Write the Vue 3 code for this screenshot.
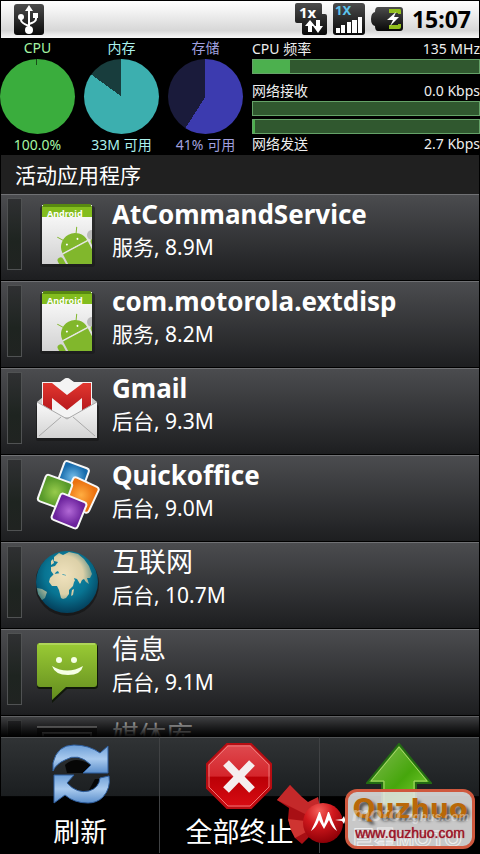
<script setup>
import { ref } from 'vue';

const gauges = [
  { key: 'cpu', label: 'CPU', value: '100.0%' },
  { key: 'mem', label: '内存', value: '33M 可用' },
  { key: 'disk', label: '存储', value: '41% 可用' }
];

const apps = ref([
  { name: 'AtCommandService', detail: '服务, 8.9M', icon: 'android' },
  { name: 'com.motorola.extdisp', detail: '服务, 8.2M', icon: 'android' },
  { name: 'Gmail', detail: '后台, 9.3M', icon: 'gmail' },
  { name: 'Quickoffice', detail: '后台, 9.0M', icon: 'office' },
  { name: '互联网', detail: '后台, 10.7M', icon: 'globe', cjk: true },
  { name: '信息', detail: '后台, 9.1M', icon: 'message', cjk: true },
  { name: '媒体库', icon: 'media', cjk: true }
]);
</script>

<template>
  <div class="phone">
    <header class="status-bar">
      <svg class="usb" viewBox="0 0 32 32">
        <defs>
          <linearGradient id="dark" x1="0" y1="0" x2="0" y2="1">
            <stop offset="0" stop-color="#4c4c4c" /><stop offset="1" stop-color="#080808" />
          </linearGradient>
        </defs>
        <rect x="1" y="1" width="30" height="31" rx="3" fill="url(#dark)" />
        <path d="M16 6v20M16 23q-8-3-8-6v-4M16 21q7-2 7-5v-4" fill="none" stroke="#fff" stroke-width="2" />
        <path d="M12 8l4-6 4 6z" fill="#fff" />
        <circle cx="16" cy="27" r="4" fill="#fff" />
        <circle cx="8" cy="14" r="3" fill="#fff" />
        <rect x="20" y="10" width="5" height="5" fill="#fff" />
      </svg>
      <div class="status-icons">
        <svg width="32" height="32" viewBox="0 0 32 32">
          <path d="M2 0h23q2 0 2 2v9h3q2 0 2 2v17q0 2-2 2H9q-2 0-2-2V20H2q-2 0-2-2V2q0-2 2-2z" fill="url(#dark)" />
          <text x="4" y="15" class="net-type">1x</text>
          <path d="M10 23l5-6 5 6h-3v6h-4v-6zM18 23h3v-6h4v6h3l-5 7z" fill="#fff" />
        </svg>
        <svg width="32" height="32" viewBox="0 0 32 32">
          <rect width="32" height="32" rx="3" fill="url(#dark)" />
          <text x="2" y="12" class="net-signal">1X</text>
          <path d="M3 25h4v5H3zM8 22h4v8H8zM14 19h4v11h-4zM19 17h5v13h-5zM25 14h4v16h-4z" fill="#fff" />
        </svg>
        <svg width="32" height="24" viewBox="0 0 32 24">
          <path d="M7 0h22q3 0 3 3v18q0 3-3 3H7q-3 0-3-5-4-1-4-7t4-7q0-5 3-5z" fill="url(#dark)" />
          <path d="M18 2h11q1 0 1 2v3h-3V6h-9zM18 18h9v-1h3v3q0 2-2 2H18z" fill="#92bf1d" />
          <path d="M25 5l-9 8h6l-3 6 9-9h-5z" fill="#fff" />
        </svg>
        <time class="clock">15:07</time>
      </div>
    </header>

    <section class="monitor">
      <div v-for="g in gauges" :key="g.key" :class="['gauge', g.key]">
        <span>{{ g.label }}</span>
        <i class="pie"></i>
        <span>{{ g.value }}</span>
      </div>
      <div class="meters">
        <div class="meter-text"><span>CPU 频率</span><span>135 MHz</span></div>
        <div class="meter"><i class="fill cpu-fill"></i></div>
        <div class="meter-text receive"><span>网络接收</span><span>0.0 Kbps</span></div>
        <div class="meter"></div>
        <div class="meter send"><i class="fill send-fill"></i></div>
        <div class="meter-text"><span>网络发送</span><span>2.7 Kbps</span></div>
      </div>
    </section>

    <h1 class="heading">活动应用程序</h1>

    <main class="list-window">
      <ul class="app-list">
        <li v-for="app in apps" :key="app.name" class="app-row">
          <i class="load"></i>
          <svg v-if="app.icon === 'android'" class="app-icon" viewBox="0 0 64 72">
            <defs>
              <linearGradient id="paper" x1="0" y1="0" x2="0" y2="1">
                <stop offset="0" stop-color="#fff" /><stop offset="1" stop-color="#d2d2d2" />
              </linearGradient>
              <clipPath id="sheet"><rect x="6" y="4" width="50" height="61" /></clipPath>
            </defs>
            <rect x="4" y="7" width="55" height="61" rx="3" fill="#151515" opacity=".5" />
            <rect x="6" y="6" width="50" height="59" fill="url(#paper)" />
            <path d="M8 5h46l2 3v10H6V8z" fill="#83bd1e" />
            <path d="M8 5h46l2 3H6z" fill="#588a11" />
            <text x="11" y="18" class="sheet-text">Android</text>
            <g clip-path="url(#sheet)">
              <circle cx="56" cy="36" r="5" fill="#bbb" />
              <g transform="translate(39 48) rotate(-28)" fill="#81b72c">
                <path d="M-14 0a14 14 0 0 1 28 0zM-14 1h28v30h-28z" />
                <rect x="-22" y="2" width="6" height="20" rx="3" />
                <rect x="16" y="1" width="6" height="20" rx="3" />
                <path d="M-7-11l-4-6M7-11l4-6" stroke="#81b72c" />
                <path d="M-14 0h28" stroke="#eee" />
                <circle cx="-6" cy="-6" r="1" fill="#fff" /><circle cx="6" cy="-6" r="1" fill="#fff" />
              </g>
            </g>
          </svg>
          <svg v-else-if="app.icon === 'gmail'" class="app-icon" viewBox="0 0 64 72">
            <defs>
              <linearGradient id="mred" x1="0" y1="0" x2="0" y2="1">
                <stop offset="0" stop-color="#e2372f" /><stop offset="1" stop-color="#b3161b" />
              </linearGradient>
              <linearGradient id="flap" x1="0" y1="0" x2="0" y2="1">
                <stop offset="0" stop-color="#fafafa" /><stop offset="1" stop-color="#d3d3d3" />
              </linearGradient>
            </defs>
            <rect x="0" y="32" width="63" height="36" rx="2" fill="#111" opacity=".5" />
            <path d="M1 29l6-5 20-17q4-4 8 0l20 17 6 5v20H1z" fill="#c9c9c9" />
            <path d="M6 9h18l3-2q4-4 8 0l3 2h18v35H6z" fill="#f4f4f4" />
            <path d="M7 10h9l15 12 16-12h8v30H46V25L31 37 16 25v15H7z" fill="url(#mred)" />
            <path d="M1 29l30 17 30-17v36H1z" fill="url(#flap)" />
            <path d="M1 29l30 17 30-17M3 63l22-19M59 63L37 44" fill="none" stroke="#aaa" />
          </svg>
          <svg v-else-if="app.icon === 'office'" class="app-icon" viewBox="0 0 64 72">
            <defs>
              <radialGradient id="blue"><stop stop-color="#71bae6" /><stop offset="1" stop-color="#176bac" /></radialGradient>
              <radialGradient id="green"><stop stop-color="#97cb4c" /><stop offset="1" stop-color="#589a2a" /></radialGradient>
              <radialGradient id="orange"><stop stop-color="#ffae42" /><stop offset="1" stop-color="#eb710f" /></radialGradient>
              <radialGradient id="purple"><stop stop-color="#b269d6" /><stop offset="1" stop-color="#6c239d" /></radialGradient>
            </defs>
            <g stroke="#f7f7f7" stroke-width="2">
              <rect x="-13" y="-13" width="26" height="26" rx="3" transform="translate(37 17) rotate(20)" fill="url(#blue)" />
              <rect x="-14" y="-14" width="28" height="28" rx="3" transform="translate(45 35) rotate(25)" fill="url(#orange)" />
              <rect x="-14" y="-14" width="28" height="28" rx="3" transform="translate(19 32) rotate(20)" fill="url(#green)" />
              <rect x="-14" y="-14" width="28" height="28" rx="3" transform="translate(33 51) rotate(22)" fill="url(#purple)" />
            </g>
          </svg>
          <svg v-else-if="app.icon === 'globe'" class="app-icon" viewBox="0 0 64 72">
            <defs>
              <radialGradient id="ocean" cx=".5" cy=".38" r=".6">
                <stop stop-color="#178fb0" /><stop offset=".6" stop-color="#087492" /><stop offset="1" stop-color="#04425e" />
              </radialGradient>
              <radialGradient id="land" gradientUnits="userSpaceOnUse" cx="28" cy="28" r="32">
                <stop stop-color="#f0e2bd" /><stop offset=".6" stop-color="#dcd0a8" /><stop offset="1" stop-color="#4e8580" />
              </radialGradient>
            </defs>
            <circle cx="31" cy="37" r="32" fill="#111" opacity=".6" />
            <circle cx="31" cy="35" r="31" fill="url(#ocean)" />
            <g fill="url(#land)">
              <path d="M18 27l7-1 2 2 6 1 2 4 3 2-1 4-4 4v4l-3 4-3 1-2-1-2-8-2-4-5 0-3-4 1-4z" />
              <path d="M15 24v-4l4-1 3-4-4-1 0-4 5-4 4 2 6-3 9 2 6 5 5 7 3 8-2 4-3 0 2 6-3-2-2-3-2 1-2 4-3-5-3-1 1 3-4 3-3-6-2-1 0-2-4-1-2 1-2-4-2 1-2 3z" />
              <path d="M1 41l5 1 5 3-2 6-3 2-4-6zM15 14l2-2 1 4-3 2zM36 43l2-1-1 6-2 1zM44 33l1 2-1 1z" />
            </g>
          </svg>
          <svg v-else-if="app.icon === 'message'" class="app-icon" viewBox="0 0 64 72">
            <defs>
              <linearGradient id="bubble" x1="0" y1="0" x2="0" y2="1">
                <stop offset="0" stop-color="#9acb35" /><stop offset="1" stop-color="#638c1e" />
              </linearGradient>
            </defs>
            <path d="M4 10h54q4 0 4 3v39q0 3-4 3H31L16 69V55H4q-3 0-3-3V13q0-3 3-3z" fill="#10180a" />
            <path d="M4 9h54q3 0 3 3v38q0 3-3 3H30L16 66V53H4q-3 0-3-3V12q0-3 3-3z" fill="url(#bubble)" />
            <path d="M3 10h56" stroke="#c4e17d" />
            <circle cx="23" cy="26" r="3" fill="#f5ffe5" /><circle cx="38" cy="26" r="3" fill="#f5ffe5" />
            <path d="M16 32q15 9 31 0-2 9-15 9T16 32z" fill="#f5ffe5" />
          </svg>
          <svg v-else class="app-icon" viewBox="0 0 64 72">
            <path d="M1 6h60v42H1z" fill="#222" /><path d="M1 6h60M7 12h48v30H7z" fill="none" stroke="#bbb" stroke-width="2" />
          </svg>
          <div class="app-text">
            <h2 :class="{ cjk: app.cjk }">{{ app.name }}</h2>
            <p v-if="app.detail">{{ app.detail }}</p>
          </div>
        </li>
      </ul>
    </main>

    <footer class="toolbar">
      <button type="button">
        <svg viewBox="0 0 66 66">
          <defs>
            <linearGradient id="sync" x1="0" y1="0" x2="0" y2="1">
              <stop offset="0" stop-color="#6d9fd8" /><stop offset=".5" stop-color="#a9caee" /><stop offset="1" stop-color="#5c8fcc" />
            </linearGradient>
          </defs>
          <path d="M18 22q10-10 26 0l-8 8H20zM48 36l6 0q-2 10-12 11z" fill="#060606" />
          <path d="M6 28v-8Q10 2 27 2q15 0 26 8l8-7v27H36l8-8Q31 9 18 17 9 21 6 28z" fill="url(#sync)" stroke="#2f5f9f" />
          <path d="M62 33q2 12-6 21-6 6-15 6-14 0-23-8L7 60V32h20l-7 8q10 11 22 8 10-3 11-13z" fill="url(#sync)" stroke="#2f5f9f" />
        </svg>
        <span>刷新</span>
      </button>
      <button type="button">
        <svg viewBox="0 0 66 66">
          <defs>
            <linearGradient id="stop" x1="0" y1="0" x2="0" y2="1">
              <stop offset="0" stop-color="#df4b50" /><stop offset=".5" stop-color="#d5262c" /><stop offset=".52" stop-color="#bb0006" /><stop offset="1" stop-color="#d90c13" />
            </linearGradient>
          </defs>
          <path d="M21 1h24l20 20v24L45 65H21L1 45V21z" fill="url(#stop)" stroke="#b70d12" stroke-width="2" />
          <path d="M22 3h22l19 19v22L44 63H22L3 44V22z" fill="none" stroke="#eb7777" />
          <path d="M20 20l26 27M46 20L20 47" stroke="#f5eeee" stroke-width="8" />
        </svg>
        <span>全部终止</span>
      </button>
      <button type="button" aria-label="上">
        <svg viewBox="0 0 66 66">
          <defs>
            <linearGradient id="up" x1="0" y1="0" x2="1" y2="1">
              <stop offset="0" stop-color="#88bd57" /><stop offset=".55" stop-color="#46a60c" /><stop offset="1" stop-color="#8bdc3e" />
            </linearGradient>
          </defs>
          <path d="M33 1l32 39H50v25H16V40H1z" fill="url(#up)" stroke="#236b13" stroke-width="2" />
          <path d="M33 4l28 34H48v26H18V38H5z" fill="none" stroke="#a9d46d" />
        </svg>
      </button>
    </footer>

    <div class="watermark">
      <svg class="moto" viewBox="0 0 72 64">
        <defs>
          <radialGradient id="ball" cx=".4" cy=".2" r=".8">
            <stop stop-color="#f4605a" /><stop offset=".45" stop-color="#d0181d" /><stop offset="1" stop-color="#8d0007" />
          </radialGradient>
        </defs>
        <path d="M13 0L0 15l12 8-1 11 3 11 4 8 7 6 21-21z" fill="#a80f14" />
        <path d="M13 0L0 15l46 23-21-26zM25 12l6 5 10-5 5 26z" fill="#c4292a" />
        <path d="M11 34l35 4-28 15-4-8z" fill="#cf3431" />
        <circle cx="46" cy="38" r="20" fill="url(#ball)" />
        <path d="M34 46q5-10 8-19h1l4 12 4-12h1q3 9 8 19-5-3-8-11l-5 9-5-9q-3 8-8 11z" fill="#fff" />
        <path d="M58 35l7-1 2-3 1 3 4 1-4 1-1 3-2-3z" fill="#fff" />
      </svg>
      <div class="stamp">
        <div class="under">
          <em>moto.<small>zghus.com</small></em>
          <b>巨星MOTO</b>
        </div>
        <strong>Quzhuo</strong>
        <a href="#">www.quzhuo.com</a>
      </div>
    </div>
  </div>
</template>

<style>
body { margin: 0; background: #000; }
</style>

<style scoped>
.phone {
  position: relative; height: 100vh; box-sizing: border-box; padding: 1px; display: flex; flex-direction: column;
  overflow: hidden; background: #000; color: #fff; font-family: "Noto Sans", "Noto Sans CJK SC", sans-serif;
}

/* Barra de status */
.status-bar {
  display: flex; justify-content: space-between; height: 37px; flex: none; box-sizing: border-box; padding: 2px 8px 0 12px;
  background: linear-gradient(#fff, #f4f4f4 25%, #d7d7d7 80%, #f8f8f8);
}
.usb { width: 32px; height: 32px; }
.status-icons { display: flex; gap: 6px; align-items: center; height: 32px; }
.status-icons svg { overflow: visible; }
.net-type { fill: #fff; font-size: 15px; font-weight: 700; }
.net-signal { fill: #5cc4ee; font-size: 13px; font-weight: 700; }
.clock { width: 62px; color: #000; font-size: 23px; line-height: 32px; font-weight: 700; text-align: right; }

/* Monitor */
.monitor { display: flex; height: 117px; flex: none; font-size: 14px; line-height: 20px; }
.gauge { width: 84px; display: flex; flex-direction: column; align-items: center; box-sizing: border-box; padding-right: 11px; white-space: nowrap; }
.gauge span { height: 20px; }
.pie { width: 75px; height: 75px; margin: 1px 0; border-radius: 50%; flex: none; }
.cpu { color: #a5f5a4; }
.mem { color: #acf1ed; }
.disk { color: #a1a0df; }
.cpu .pie { background: conic-gradient(#3aad3d 99.5%, #184b19 0); }
.mem .pie { background: conic-gradient(#3cafaf 85%, #183d3d 0); }
.disk .pie { background: conic-gradient(#3c3baf 59%, #1a1b3b 0); }
.meters { flex: 1; min-width: 0; margin: 1px -1px 0; color: #eee; }
.meter-text { display: flex; justify-content: space-between; height: 20px; }
.receive { margin-top: 7px; }
.meter { height: 15px; box-sizing: border-box; border: 1px solid #65a268; background: #30582f; }
.send { margin-top: 3px; }
.fill { display: block; height: 100%; background: #4cb04e; }
.cpu-fill { width: 37px; }
.send-fill { width: 2px; }

.heading { flex: none; height: 39px; margin: 0; padding-left: 14px; background: #202020; font-size: 21px; line-height: 40px; font-weight: 400; }

/* Lista */
.list-window { position: relative; flex: 1; min-height: 0; overflow: hidden; }
.list-window::after { content: ""; position: absolute; inset: auto 0 0; height: 24px; background: linear-gradient(transparent, #000); }
.app-list { list-style: none; margin: 0; padding: 0; }
.app-row {
  display: flex; box-sizing: border-box; height: 87px; padding-left: 6px;
  background: linear-gradient(#4b4c4f, #1d1e20); border-top: 1px solid #707174; border-bottom: 1px solid #000;
}
.load { box-sizing: border-box; flex: none; width: 15px; height: 72px; margin-top: 3px; border: 1px solid #505253; background: linear-gradient(#2f3032, #1e2420 60%, #202321); }
.app-icon { flex: none; width: 64px; height: 72px; margin: 4px 12px 0 14px; }
.sheet-text { fill: #fff; font-size: 9px; font-weight: 700; }
.app-text { min-width: 0; white-space: nowrap; }
.app-text h2 { margin: 0; font-size: 26px; line-height: 38px; font-weight: 700; }
.app-text .cjk { font-size: 27px; font-weight: 400; }
.app-text p { margin: 0; font-size: 21px; line-height: 28px; }

/* Botões */
.toolbar { flex: none; display: grid; grid-template-columns: repeat(3, 1fr); height: 116px; }
.toolbar button {
  min-width: 0; padding: 5px 0 0; display: flex; flex-direction: column; align-items: center; gap: 4px;
  border: 0; border-top: 1px solid #515355; border-right: 1px solid #404244; color: #fff; font: inherit; font-size: 27px; line-height: 38px;
  background: linear-gradient(#303335, #1b1e20 50%, #000 51%);
}
.toolbar button:last-child { border-right: 0; }
.toolbar svg { width: 66px; height: 66px; flex: none; }

/* Marca sobre os botões */
.watermark { position: absolute; right: 5px; bottom: 5px; display: flex; align-items: flex-end; }
.moto { width: 72px; height: 64px; margin-right: -4px; }
.stamp {
  position: relative; box-sizing: border-box; width: 130px; height: 60px; border: 3px solid #cf583e; border-radius: 12px;
  overflow: hidden; background: rgba(228, 228, 228, 0.88); text-align: center; white-space: nowrap;
}
.stamp strong { display: block; color: #b96808; font-family: "DejaVu Sans", sans-serif; font-size: 27px; line-height: 33px; font-weight: 700; text-shadow: 3px 3px 3px #555; }
.stamp a { position: relative; z-index: 2; display: block; color: #9d1427; font-size: 14px; line-height: 16px; font-family: "Liberation Sans", sans-serif; text-decoration: none; text-shadow: 0 0 1px #9d1427; }
.under { position: absolute; inset: 13px 0 0 4px; z-index: 1; text-align: left; font-family: "Liberation Sans", "Noto Sans CJK SC", sans-serif; }
.under em { display: block; color: rgba(255, 255, 255, 0.4); font-size: 20px; line-height: 18px; font-weight: 700; }
.under small { font-size: 12px; }
.under b { display: block; color: transparent; font-size: 22px; line-height: 26px; -webkit-text-stroke: 1px rgba(255, 255, 255, 0.7); }
</style>
